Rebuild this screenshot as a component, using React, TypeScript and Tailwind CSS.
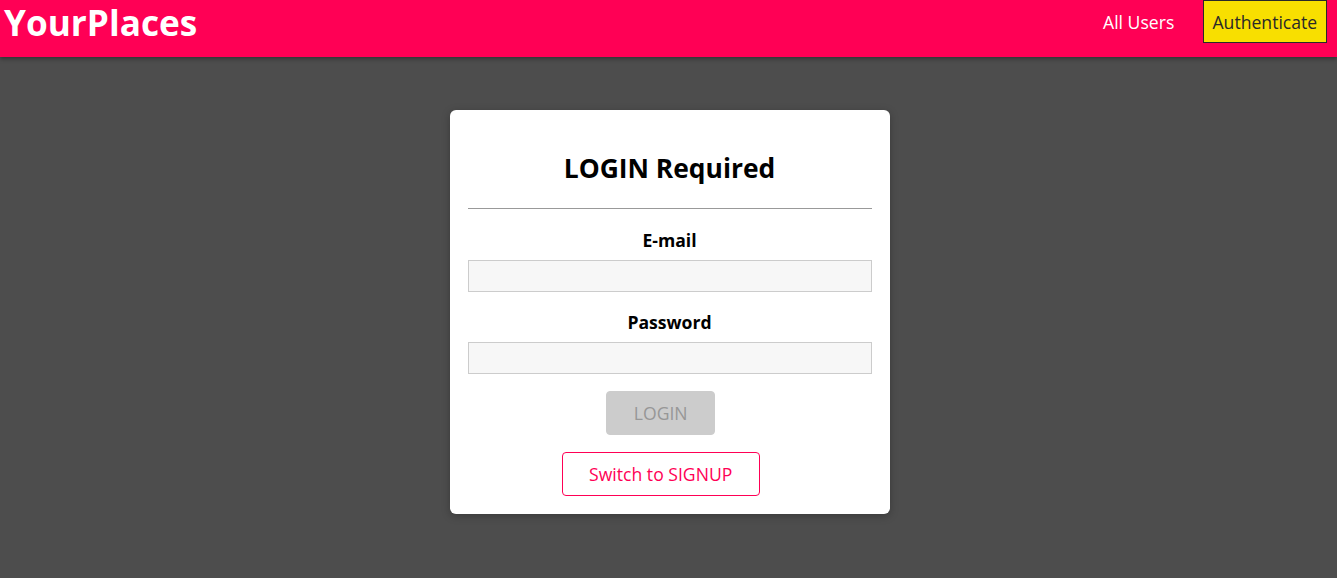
import React from 'react';

const font = { fontFamily: '"Open Sans", "Liberation Sans", sans-serif' };

const Header: React.FC = () => (
  <header className="h-[57px] w-full bg-[#ff0055] flex items-center justify-between pb-3 pl-[4px] pr-[10px] shadow-[0_2px_4px_rgba(0,0,0,0.35)] relative">
    <h1 className="text-[35.2px] font-bold text-white leading-none">YourPlaces</h1>
    <ul className="flex items-center gap-[18.6px] -mt-[2px]">
      <li>
        <a className="block border border-transparent px-[8.8px] py-[8.8px] text-[17.6px] leading-[24px] text-white">
          All Users
        </a>
      </li>
      <li>
        <a className="block border border-[#292929] bg-[#f8df00] px-[8.8px] py-[8.8px] text-[17.6px] leading-[24px] text-[#292929]">
          Authenticate
        </a>
      </li>
    </ul>
  </header>
);

const Field: React.FC<{ label: string; top: string }> = ({ label, top }) => (
  <div className={`flex flex-col ${top}`}>
    <label className="text-[17.6px] font-bold leading-[24px] text-black">{label}</label>
    <input className="mt-2 h-[32px] w-full border border-[#ccc] bg-[#f7f7f7] outline-none" />
  </div>
);

export default function App() {
  return (
    <div className="min-h-[578px] bg-[#4d4d4d]" style={font}>
      <Header />
      <main className="flex justify-center pt-[53px] pl-[2px]">
        <div className="w-[440px] rounded-md bg-white px-[18px] pt-[40px] pb-[18px] text-center shadow-[0_2px_8px_rgba(0,0,0,0.26)]">
          <h2 className="text-[26.4px] font-bold leading-[36px] text-black">LOGIN Required</h2>
          <hr className="mt-[22px] border-0 border-t border-[#999]" />
          <Field label="E-mail" top="mt-[19px]" />
          <Field label="Password" top="mt-[18px]" />
          <div className="flex flex-col items-center">
            <button
              disabled
              className="mt-[17px] mr-[17.6px] h-[44px] rounded-[4px] border border-[#ccc] bg-[#ccc] px-[26.4px] text-[17.6px] text-[#979797]"
            >
              LOGIN
            </button>
            <button className="mt-[17px] mr-[17.6px] h-[44px] rounded-[4px] border border-[#ff0055] bg-white px-[26.4px] text-[17.6px] text-[#ff0055]">
              Switch to SIGNUP
            </button>
          </div>
        </div>
      </main>
    </div>
  );
}
